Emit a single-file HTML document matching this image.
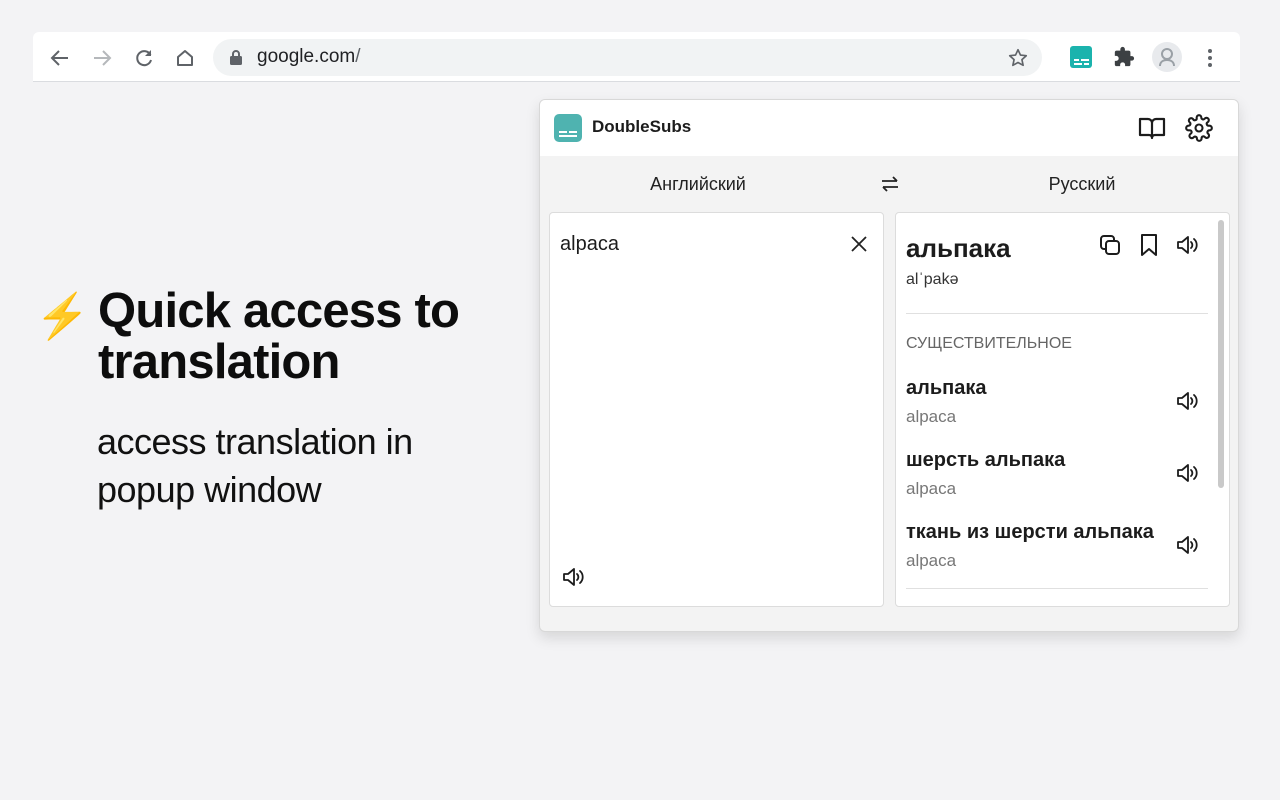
<!DOCTYPE html>
<html><head><meta charset="utf-8"><style>
*{box-sizing:border-box;margin:0;padding:0}
body{width:1280px;height:800px;background:#f3f3f5;font-family:"Liberation Sans","Noto Sans CJK SC",sans-serif;position:relative;overflow:hidden;color:#202124}
.abs{position:absolute}
.bar{left:33px;top:32px;width:1207px;height:50px;background:#fff;border-radius:6px 6px 0 0;border-bottom:1px solid #dadce0}
.omni{left:213px;top:39px;width:829px;height:37px;background:#f1f3f4;border-radius:19px}
.popup{left:539px;top:99px;width:700px;height:533px;background:#f3f3f3;border:1px solid #d8d8d8;border-radius:6px;box-shadow:0 6px 14px rgba(0,0,0,.12);overflow:hidden}
.hdr{left:0;top:0;width:698px;height:56px;background:#fff}
.card{background:#fff;border:1px solid #dcdcdc;border-radius:4px}
.t{font-weight:bold;color:#1c1c1c}
.s{color:#777;font-size:17px}
</style></head><body>
<div class="abs bar"></div>
<svg class="abs" style="left:48px;top:46px" width="24" height="24" viewBox="0 0 24 24"><path d="M20 12H5M11 5l-7 7 7 7" stroke="#5f6368" stroke-width="2" fill="none"/></svg>
<svg class="abs" style="left:90px;top:46px" width="24" height="24" viewBox="0 0 24 24"><path d="M4 12h15M13 5l7 7-7 7" stroke="#b5b8bb" stroke-width="2" fill="none"/></svg>
<svg class="abs" style="left:132px;top:46px" width="24" height="24" viewBox="0 0 24 24"><path d="M18.5 9A7 7 0 1 0 19 14" stroke="#5f6368" stroke-width="2" fill="none"/><path d="M19 4v6h-6z" fill="#5f6368"/></svg>
<svg class="abs" style="left:173px;top:46px" width="24" height="24" viewBox="0 0 24 24"><path d="M5 11l7-6 7 6v8H5z" stroke="#5f6368" stroke-width="2" fill="none" stroke-linejoin="round"/></svg>
<div class="abs omni"></div>
<svg class="abs" style="left:228px;top:49px" width="16" height="18" viewBox="0 0 16 18"><rect x="2" y="7" width="12" height="9" rx="1.5" fill="#5f6368"/><path d="M5 7V5a3 3 0 0 1 6 0v2" stroke="#5f6368" stroke-width="2" fill="none"/></svg>
<div class="abs" style="left:257px;top:46px;font-size:19px;color:#202124">google.com<span style="color:#5f6368">/</span></div>
<svg class="abs" style="left:1007px;top:47px" width="22" height="22" viewBox="0 0 24 24"><path d="M12 3l2.7 5.8 6.3.7-4.7 4.3 1.3 6.2L12 16.9 6.4 20l1.3-6.2L3 9.5l6.3-.7z" stroke="#5f6368" stroke-width="1.8" fill="none" stroke-linejoin="round"/></svg>
<div class="abs" style="left:1070px;top:46px;width:22px;height:22px;background:#1bb3ad;border-radius:3px"></div>
<div class="abs" style="left:1074px;top:59px;width:5px;height:2px;background:#fff"></div><div class="abs" style="left:1081px;top:59px;width:8px;height:2px;background:#fff"></div>
<div class="abs" style="left:1074px;top:63px;width:8px;height:2px;background:#fff"></div><div class="abs" style="left:1084px;top:63px;width:5px;height:2px;background:#fff"></div>
<svg class="abs" style="left:1113px;top:46px" width="22" height="22" viewBox="0 0 24 24"><path d="M20.5 11H19V7a2 2 0 0 0-2-2h-4V3.5a2.5 2.5 0 0 0-5 0V5H4a2 2 0 0 0-2 2v3.8h1.5a2.7 2.7 0 0 1 0 5.4H2V20a2 2 0 0 0 2 2h3.8v-1.5a2.7 2.7 0 0 1 5.4 0V22H17a2 2 0 0 0 2-2v-4h1.5a2.5 2.5 0 0 0 0-5z" fill="#3c4043"/></svg>
<div class="abs" style="left:1152px;top:42px;width:30px;height:30px;background:#e8eaed;border-radius:50%"></div>
<svg class="abs" style="left:1156px;top:46px" width="22" height="22" viewBox="0 0 22 22"><circle cx="11" cy="8" r="5" fill="none" stroke="#9aa0a6" stroke-width="2"/><path d="M4 20c0-4 3-6 7-6s7 2 7 6" fill="none" stroke="#9aa0a6" stroke-width="2"/></svg>
<div class="abs" style="left:1208px;top:49px;width:4px;height:4px;border-radius:50%;background:#5f6368;box-shadow:0 7px 0 #5f6368,0 14px 0 #5f6368"></div>

<div class="abs" style="left:35px;top:290px;font-size:44px;color:#f5a700">⚡</div>
<div class="abs" style="left:98px;top:286px;font-size:49px;font-weight:bold;line-height:51px;color:#0d0d0d;letter-spacing:-0.8px">Quick access to<br>translation</div>
<div class="abs" style="left:97px;top:418px;font-size:36px;line-height:48px;color:#111;letter-spacing:-0.5px">access translation in<br>popup window</div>

<div class="abs popup">
 <div class="abs hdr"></div>
 <div class="abs" style="left:14px;top:14px;width:28px;height:28px;background:#4fb3b0;border-radius:5px"></div>
 <div class="abs" style="left:19px;top:31px;width:8px;height:2px;background:#fff"></div><div class="abs" style="left:29px;top:31px;width:8px;height:2px;background:#fff"></div>
 <div class="abs" style="left:19px;top:35px;width:18px;height:2px;background:#fff"></div>
 <div class="abs" style="left:52px;top:17px;font-size:17px;font-weight:bold;color:#1c1c1c">DoubleSubs</div>
 <svg class="abs" style="left:598px;top:15px" width="28" height="26" viewBox="0 0 28 26"><path d="M2 4h8a4 4 0 0 1 4 4v15a3 3 0 0 0-3-3H2zM26 4h-8a4 4 0 0 0-4 4v15a3 3 0 0 1 3-3h9z" fill="none" stroke="#1c1c1c" stroke-width="2.2" stroke-linejoin="round"/></svg>
 <svg class="abs" style="left:645px;top:14px" width="28" height="28" viewBox="0 0 24 24"><circle cx="12" cy="12" r="3" fill="none" stroke="#1c1c1c" stroke-width="1.8"/><path d="M19.4 15a1.6 1.6 0 0 0 .3 1.8l.1.1a2 2 0 1 1-2.8 2.8l-.1-.1a1.6 1.6 0 0 0-2.7 1.1V21a2 2 0 1 1-4 0v-.1a1.6 1.6 0 0 0-2.7-1.1l-.1.1a2 2 0 1 1-2.8-2.8l.1-.1A1.6 1.6 0 0 0 3.6 14H3a2 2 0 1 1 0-4h.1a1.6 1.6 0 0 0 1.1-2.7l-.1-.1a2 2 0 1 1 2.8-2.8l.1.1A1.6 1.6 0 0 0 10 3.5V3a2 2 0 1 1 4 0v.1a1.6 1.6 0 0 0 2.7 1.1l.1-.1a2 2 0 1 1 2.8 2.8l-.1.1A1.6 1.6 0 0 0 20.5 10h.5a2 2 0 1 1 0 4h-.1a1.6 1.6 0 0 0-1.5 1z" fill="none" stroke="#1c1c1c" stroke-width="1.8"/></svg>
 <div class="abs" style="left:0;width:316px;top:74px;text-align:center;font-size:18px;color:#222">Английский</div>
 <div class="abs" style="left:384px;width:316px;top:74px;text-align:center;font-size:18px;color:#222">Русский</div>
 <svg class="abs" style="left:338px;top:72px" width="24" height="24" viewBox="0 0 24 24"><path d="M4 9h15M15 5l4 4M20 15H5M9 19l-4-4" stroke="#222" stroke-width="1.8" fill="none"/></svg>
 <div class="abs card" style="left:9px;top:112px;width:335px;height:395px"></div>
 <div class="abs" style="left:20px;top:133px;font-size:20px;color:#1c1c1c">alpaca</div>
 <svg class="abs" style="left:309px;top:134px" width="20" height="20" viewBox="0 0 20 20"><path d="M3 3l14 14M17 3L3 17" stroke="#222" stroke-width="1.8"/></svg>
 <svg class="abs" style="left:21px;top:465px" width="26" height="24" viewBox="0 0 26 24" id="spk"><path d="M3 9h4l6-5v16l-6-5H3z" fill="none" stroke="#1c1c1c" stroke-width="1.8" stroke-linejoin="round"/><path d="M16 9a4 4 0 0 1 0 6M19 6a8 8 0 0 1 0 12" fill="none" stroke="#1c1c1c" stroke-width="1.8" stroke-linecap="round"/></svg>
 <div class="abs card" style="left:355px;top:112px;width:335px;height:395px"></div>
 <div class="abs" style="left:678px;top:120px;width:6px;height:268px;background:#c9c9c9;border-radius:3px"></div>
 <div class="abs t" style="left:366px;top:133px;font-size:26px">альпака</div>
 <div class="abs" style="left:366px;top:171px;font-size:16px;color:#333">alˈpakə</div>
 <svg class="abs" style="left:558px;top:133px" width="24" height="24" viewBox="0 0 24 24"><rect x="8" y="8" width="13" height="13" rx="3" fill="none" stroke="#1c1c1c" stroke-width="2"/><path d="M16 8V6a3 3 0 0 0-3-3H6a3 3 0 0 0-3 3v7a3 3 0 0 0 3 3h2" fill="none" stroke="#1c1c1c" stroke-width="2"/></svg>
 <svg class="abs" style="left:597px;top:132px" width="24" height="26" viewBox="0 0 24 26"><path d="M5 3h14v20l-7-6-7 6z" fill="none" stroke="#1c1c1c" stroke-width="2" stroke-linejoin="round"/></svg>
 <svg class="abs" style="left:635px;top:133px" width="26" height="24" viewBox="0 0 26 24"><use href="#spk"/></svg>
 <div class="abs" style="left:366px;top:213px;width:302px;height:1px;background:#e0e0e0"></div>
 <div class="abs" style="left:366px;top:235px;font-size:16px;color:#666">СУЩЕСТВИТЕЛЬНОЕ</div>
 <div class="abs t" style="left:366px;top:277px;font-size:20px">альпака</div>
 <div class="abs s" style="left:366px;top:307px">alpaca</div>
 <div class="abs t" style="left:366px;top:349px;font-size:20px">шерсть альпака</div>
 <div class="abs s" style="left:366px;top:379px">alpaca</div>
 <div class="abs t" style="left:366px;top:421px;font-size:20px">ткань из шерсти альпака</div>
 <div class="abs s" style="left:366px;top:451px">alpaca</div>
 <svg class="abs" style="left:635px;top:289px" width="26" height="24" viewBox="0 0 26 24"><use href="#spk"/></svg>
 <svg class="abs" style="left:635px;top:361px" width="26" height="24" viewBox="0 0 26 24"><use href="#spk"/></svg>
 <svg class="abs" style="left:635px;top:433px" width="26" height="24" viewBox="0 0 26 24"><use href="#spk"/></svg>
 <div class="abs" style="left:366px;top:488px;width:302px;height:1px;background:#e0e0e0"></div>
</div>
</body></html>
